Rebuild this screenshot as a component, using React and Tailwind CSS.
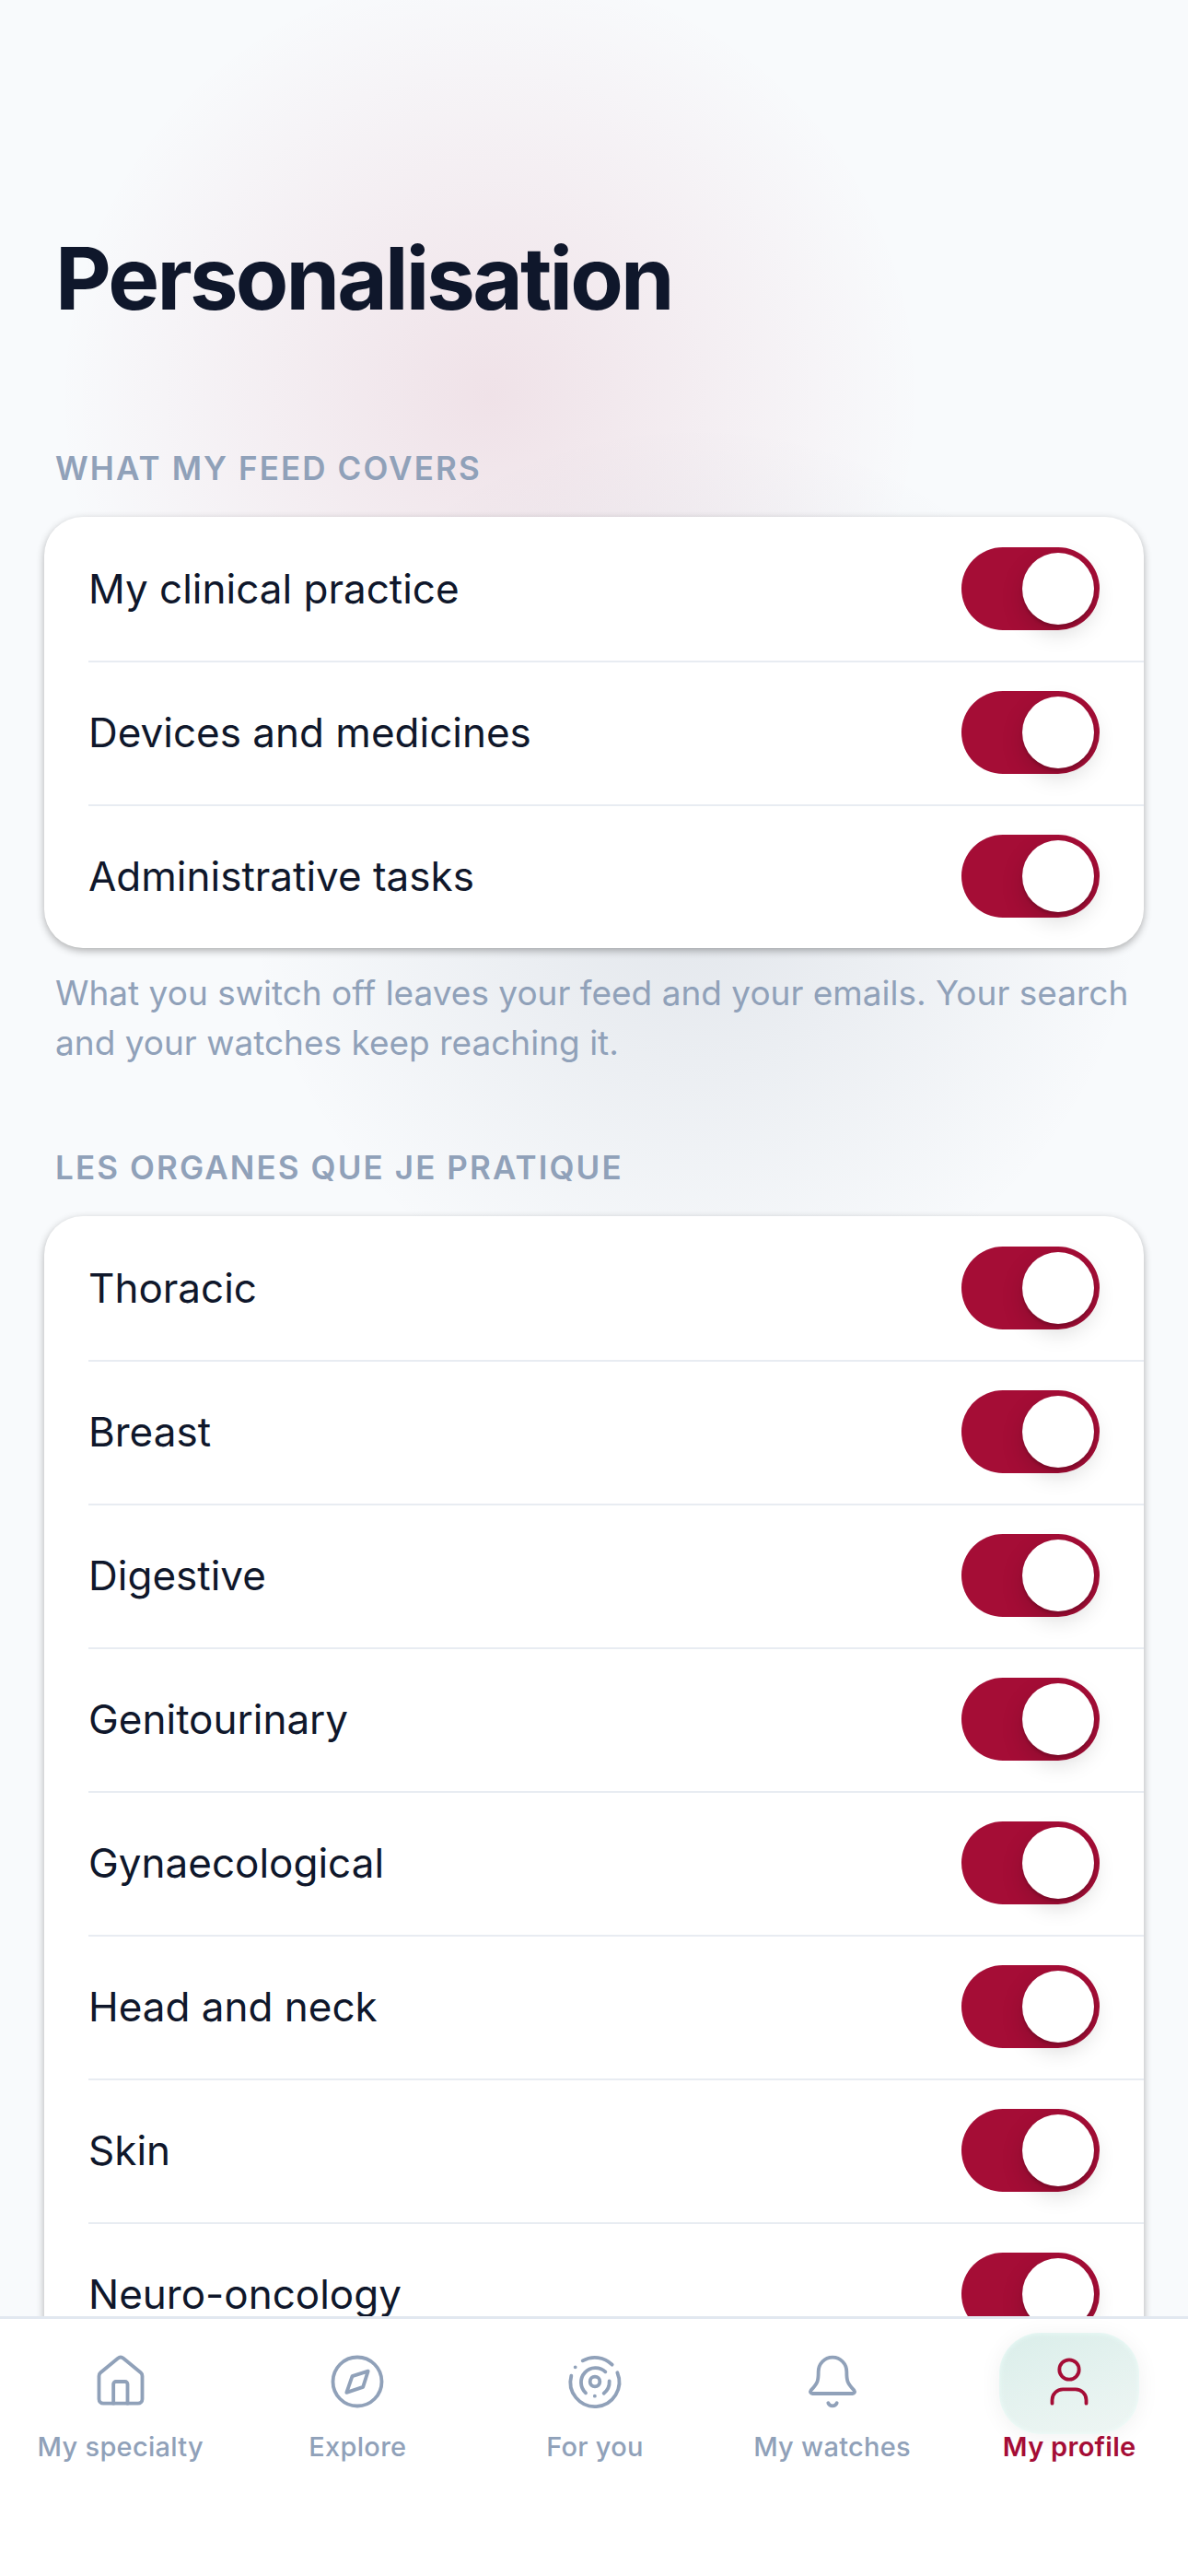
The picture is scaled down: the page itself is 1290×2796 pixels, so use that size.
import React, { useState } from 'react';

const scopes = ['My clinical practice', 'Devices and medicines', 'Administrative tasks'];

const organs = [
    'Thoracic',
    'Breast',
    'Digestive',
    'Genitourinary',
    'Gynaecological',
    'Head and neck',
    'Skin',
    'Neuro-oncology',
];

const Icon = ({ children }) => (
    <svg
        viewBox="0 0 192 192"
        className="size-16"
        fill="none"
        stroke="currentColor"
        strokeWidth="11.5"
        strokeLinecap="round"
        strokeLinejoin="round"
        aria-hidden="true"
    >
        {children}
    </svg>
);

const HomeIcon = () => (
    <Icon>
        <path d="M25.500 78a14 14 0 0 1 5-11L87 20.500a14 14 0 0 1 18 0L161.500 67a14 14 0 0 1 5 11v75a14 14 0 0 1-14 14h-113a14 14 0 0 1-14-14Z" />
        <path d="M72.500 167v-63a8 8 0 0 1 8-8h30a8 8 0 0 1 8 8v63" />
    </Icon>
);

const CompassIcon = () => (
    <Icon>
        <circle cx="96" cy="96" r="79.500" />
        <path d="M131 62 79.500 78.500 61 131.500l53.500-18Z" />
    </Icon>
);

const TargetIcon = () => (
    <Icon>
        <circle cx="96" cy="96" r="16" />
        <path d="M130 64A47 47 0 1 0 66 133" />
        <path d="M143 94A47 47 0 0 1 125 134" />
        <path d="M56 28A79.500 79.500 0 0 1 152 41" />
        <path d="M169 67A79.500 79.500 0 1 1 19 77" />
        <path d="M32 49h.1M95.500 143h.1" />
    </Icon>
);

const BellIcon = () => (
    <Icon>
        <path d="M96 17C70 17 50 38 50 64c0 28-1 36-24 60-4 6-1 11 5 11h130c6 0 9-5 5-11-23-24-24-32-24-60 0-26-20-47-46-47Z" />
        <path d="M82 166c6 12 22 12 28 0" />
    </Icon>
);

const UserIcon = () => (
    <Icon>
        <circle cx="96" cy="57" r="32" />
        <path d="M40.500 167v-11a35 35 0 0 1 35-35h41a35 35 0 0 1 35 35v11" />
    </Icon>
);

const tabs = [
    { label: 'My specialty', icon: HomeIcon },
    { label: 'Explore', icon: CompassIcon },
    { label: 'For you', icon: TargetIcon },
    { label: 'My watches', icon: BellIcon },
    { label: 'My profile', icon: UserIcon, active: true },
];

function SwitchRow({ label }) {
    const [on, setOn] = useState(true);

    return (
        <label className="ml-12 flex h-39 cursor-pointer items-center justify-between pr-12 shadow-[inset_0_2px_0_#e8ecf2] first:shadow-none">
            <span className="text-[44px] leading-[60px]">{label}</span>
            <input
                type="checkbox"
                role="switch"
                checked={on}
                onChange={() => setOn(!on)}
                className="h-[90px] w-[150px] shrink-0 appearance-none rounded-full bg-slate-300 p-[6px] before:block before:size-[78px] before:rounded-full before:bg-white before:shadow-[0_9px_24px_rgba(0,0,0,0.15),0_3px_3px_rgba(0,0,0,0.16)] checked:bg-[#a50d36] checked:before:ml-[60px]"
            />
        </label>
    );
}

function Section({ title, items, note }) {
    return (
        <section>
            <h2 className="px-3 text-[35px] leading-[48px] font-semibold tracking-[0.06em] text-slate-400 uppercase">
                {title}
            </h2>
            <div className="mt-[29px] rounded-[42px] bg-white shadow-[0_3px_9px_rgba(0,0,0,0.3)]">
                {items.map((item) => (
                    <SwitchRow key={item} label={item} />
                ))}
            </div>
            {note && <p className="mt-[22px] px-3 text-[37px] leading-[54px] text-slate-400">{note}</p>}
        </section>
    );
}

function TabBar() {
    return (
        <nav className="grid h-[282px] shrink-0 grid-cols-5 items-start border-t-3 border-slate-200 bg-white pt-[15px] pl-[2px]">
            {tabs.map(({ label, icon: TabIcon, active }) => (
                <a
                    key={label}
                    href="#"
                    aria-current={active ? 'page' : undefined}
                    className={
                        active
                            ? 'flex flex-col items-center font-semibold text-[#a50d36]'
                            : 'flex flex-col items-center font-medium text-slate-400'
                    }
                >
                    <span
                        className={
                            active
                                ? 'flex h-[110px] w-[152px] items-center justify-center rounded-[45px] bg-linear-160 from-[#daeeea] to-[#eff6f4] pb-[5px] shadow-[0_3px_24px_rgba(0,0,0,0.06),inset_0_0_6px_rgba(240,255,252,0.9)]'
                                : 'flex h-[110px] w-[152px] items-center justify-center pb-[5px]'
                        }
                    >
                        <TabIcon />
                    </span>
                    <span className="text-[29px] leading-[28px] tracking-[0.01em]">{label}</span>
                </a>
            ))}
        </nav>
    );
}

export default function App() {
    return (
        <div className="flex h-screen flex-col bg-slate-50 font-['Inter',sans-serif] text-slate-900">
            <main className="min-h-0 flex-1 overflow-hidden bg-[radial-gradient(circle_at_532px_430px,rgba(165,13,54,0.1),transparent_470px),radial-gradient(circle_at_755px_950px,rgba(30,50,85,0.1),transparent_490px)] px-12 pt-60">
                <h1 className="px-3 text-[94px] leading-[125px] font-bold tracking-[-0.03em]">Personalisation</h1>
                <div className="mt-[119px] flex flex-col gap-[84px]">
                    <Section
                        title="What my feed covers"
                        items={scopes}
                        note="What you switch off leaves your feed and your emails. Your search and your watches keep reaching it."
                    />
                    <Section title="Les organes que je pratique" items={organs} />
                </div>
            </main>
            <TabBar />
        </div>
    );
}
